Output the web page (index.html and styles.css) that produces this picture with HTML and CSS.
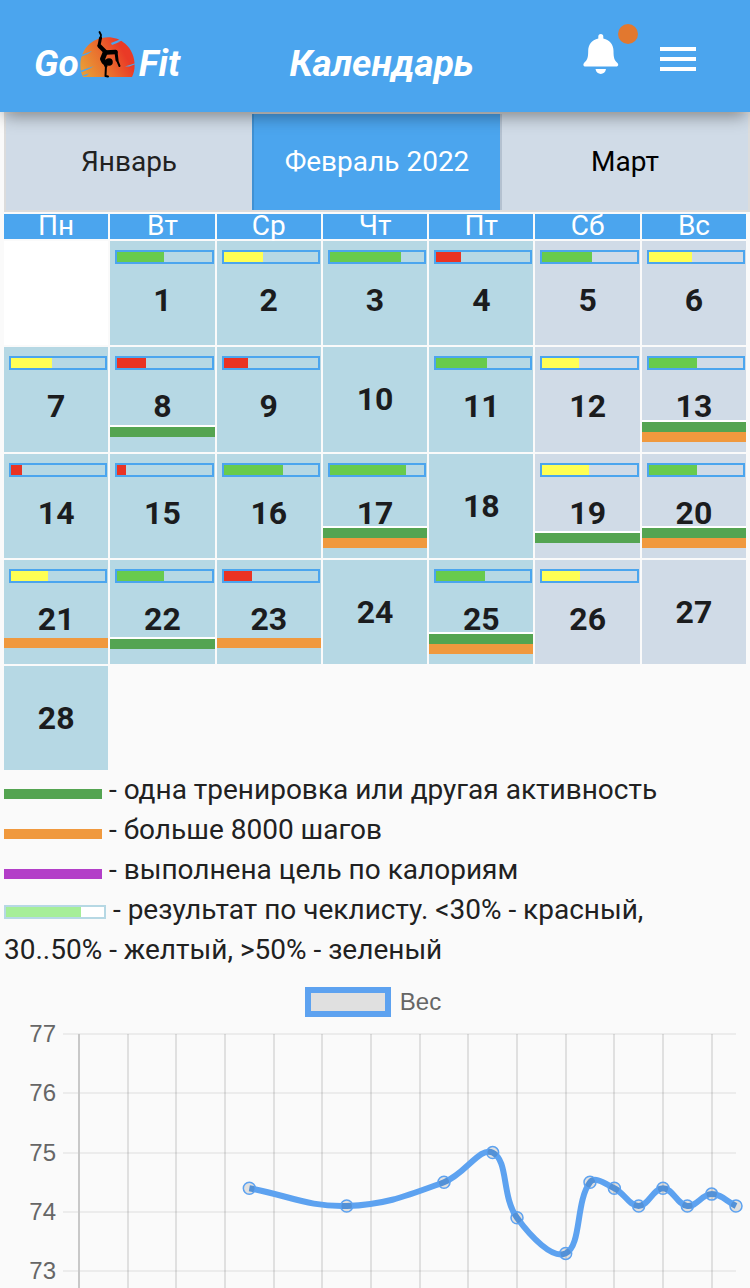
FILE: index.html
```html
<!DOCTYPE html>
<html lang="ru">
<head>
<meta charset="utf-8">
<meta name="viewport" content="width=device-width, initial-scale=1">
<title>GoFit – Календарь</title>
<link rel="stylesheet" href="styles.css">
</head>
<body>
<header class="header">
  <a class="logo" href="#" aria-label="Go Fit">
    <span>Go</span>
    <svg class="logo-mark" viewBox="0 0 58 48" aria-hidden="true">
      <defs>
        <linearGradient id="sun" x1="0" y1="0.7" x2="1" y2="0.3">
          <stop offset="0" stop-color="#e99a36"/>
          <stop offset="0.45" stop-color="#ea6a2d"/>
          <stop offset="0.8" stop-color="#ea3a26"/>
        </linearGradient>
      </defs>
      <path fill="url(#sun)" d="M4 47C-1 37 1 22 11 13.500C21 5 37 5 46 13.500C56 22 58 37 53 47Z"/>
      <g fill="#4ba5ee">
        <path d="M1 25.500L13 21L9 24L2 26.500Z"/>
        <path d="M1 41L15 36L10 39L3 42Z"/>
        <path d="M3 45.500L10 43.500L7 46Z"/>
        <path d="M32 13L42 9L44 10L38 12.500L42 11.500L33 15Z"/>
        <path d="M46 36.500L57 33V34L50 36.500Z"/>
      </g>
      <g fill="none" stroke="#000" stroke-linecap="round" stroke-linejoin="round">
        <path stroke-width="1.800" d="M20.500 2L22 5L21.500 9"/>
        <path stroke-width="3" d="M21.500 8L20 15.500"/>
        <path stroke-width="4" d="M20.500 16L26.500 22"/>
        <path stroke-width="4.500" d="M27 22.500L36.500 22"/>
        <path stroke-width="3" d="M37 22L38 30"/>
        <path stroke-width="2" d="M38 30L40.500 36"/>
        <path stroke-width="5" d="M26 23L23.500 29L25 32"/>
        <path stroke-width="3" d="M25.500 33L27 36"/>
        <path stroke-width="2" d="M27 35L26.500 46L29 46.500"/>
      </g>
      <circle cx="30" cy="32" r="3.800"/>
    </svg>
    <span>Fit</span>
  </a>
  <h1 class="title">Календарь</h1>
  <div class="actions">
    <button class="icon-button bell" type="button" aria-label="Уведомления">
      <svg width="36" height="40" viewBox="0 0 36 40" aria-hidden="true">
        <path fill="#fff" d="M15.300 2.500A2.500 2.500 0 0 1 20.300 2.500V4.500C27 6 30.500 11 30.500 17C30.500 24 31.500 26.500 34.500 29C36 31 35 32.600 33 32.600H2.500C0.500 32.600-.3 31 1 29C4.500 26 5.200 23 5.200 17C5.200 11 8.500 6 15.300 4.500Z"/>
        <path fill="#fff" d="M12.500 35H23C22 41.500 13.500 41.500 12.500 35Z"/>
      </svg>
      <span class="dot"></span>
    </button>
    <button class="icon-button" type="button" aria-label="Меню">
      <svg width="36" height="24" viewBox="0 0 36 24" aria-hidden="true">
        <path fill="#fff" d="M0 0H36V4H0ZM0 10H36V14H0ZM0 20H36V24H0Z"/>
      </svg>
    </button>
  </div>
</header>

<main>
  <nav class="months" aria-label="Месяц">
    <button class="month" type="button">Январь</button>
    <button class="month month-active" type="button">Февраль 2022</button>
    <button class="month month-next" type="button">Март</button>
  </nav>

  <table class="calendar">
    <thead>
      <tr><th>Пн</th><th>Вт</th><th>Ср</th><th>Чт</th><th>Пт</th><th>Сб</th><th>Вс</th></tr>
    </thead>
    <tbody>
      <tr>
        <td class="blank"></td>
        <td><div class="bar"><i class="good" style="width:50%"></i></div><b>1</b></td>
        <td><div class="bar"><i class="fair" style="width:42%"></i></div><b>2</b></td>
        <td><div class="bar"><i class="good" style="width:75%"></i></div><b>3</b></td>
        <td><div class="bar"><i class="poor" style="width:26%"></i></div><b>4</b></td>
        <td class="weekend"><div class="bar"><i class="good" style="width:53%"></i></div><b>5</b></td>
        <td class="weekend"><div class="bar"><i class="fair" style="width:46%"></i></div><b>6</b></td>
      </tr>
      <tr>
        <td><div class="bar"><i class="fair" style="width:43%"></i></div><b>7</b></td>
        <td><div class="bar"><i class="poor" style="width:30%"></i></div><b>8</b><div class="marks"><i class="workout"></i></div></td>
        <td><div class="bar"><i class="poor" style="width:26%"></i></div><b>9</b></td>
        <td><b>10</b></td>
        <td><div class="bar"><i class="good" style="width:54%"></i></div><b>11</b></td>
        <td class="weekend"><div class="bar"><i class="fair" style="width:39%"></i></div><b>12</b></td>
        <td class="weekend"><div class="bar"><i class="good" style="width:51%"></i></div><b>13</b><div class="marks"><i class="workout"></i><i class="steps"></i></div></td>
      </tr>
      <tr>
        <td><div class="bar"><i class="poor" style="width:12%"></i></div><b>14</b></td>
        <td><div class="bar"><i class="poor" style="width:9%"></i></div><b>15</b></td>
        <td><div class="bar"><i class="good" style="width:63%"></i></div><b>16</b></td>
        <td><div class="bar"><i class="good" style="width:81%"></i></div><b>17</b><div class="marks"><i class="workout"></i><i class="steps"></i></div></td>
        <td><b>18</b></td>
        <td class="weekend"><div class="bar"><i class="fair" style="width:49%"></i></div><b>19</b><div class="marks"><i class="workout"></i></div></td>
        <td class="weekend"><div class="bar"><i class="good" style="width:51%"></i></div><b>20</b><div class="marks"><i class="workout"></i><i class="steps"></i></div></td>
      </tr>
      <tr>
        <td><div class="bar"><i class="fair" style="width:39%"></i></div><b>21</b><div class="marks"><i class="steps"></i></div></td>
        <td><div class="bar"><i class="good" style="width:50%"></i></div><b>22</b><div class="marks"><i class="workout"></i></div></td>
        <td><div class="bar"><i class="poor" style="width:30%"></i></div><b>23</b><div class="marks"><i class="steps"></i></div></td>
        <td><b>24</b></td>
        <td><div class="bar"><i class="good" style="width:52%"></i></div><b>25</b><div class="marks"><i class="workout"></i><i class="steps"></i></div></td>
        <td class="weekend"><div class="bar"><i class="fair" style="width:40%"></i></div><b>26</b></td>
        <td class="weekend"><b>27</b></td>
      </tr>
      <tr>
        <td><b>28</b></td>
      </tr>
    </tbody>
  </table>

  <div class="legend">
    <p><i class="swatch workout"></i> - одна тренировка или другая активность</p>
    <p><i class="swatch steps"></i> - больше 8000 шагов</p>
    <p><i class="swatch calories"></i> - выполнена цель по калориям</p>
    <p><span class="bar bar-sample"><i style="width:77%"></i></span> - результат по чеклисту. &lt;30% - красный, 30..50% - желтый, &gt;50% - зеленый</p>
  </div>

  <figure class="chart">
    <figcaption class="chart-legend"><span class="chart-swatch"></span>Вес</figcaption>
    <svg class="plot" viewBox="0 0 750 264" role="img" aria-label="График веса"></svg>
  </figure>
</main>
<script src="chart.js"></script>
</body>
</html>
```
FILE: styles.css
```css
* {
  box-sizing: border-box;
}

body {
  margin: 0;
  background: #fafafa;
  color: #212121;
  font: 400 28px/40px Roboto, sans-serif;
}

button {
  margin: 0;
  padding: 0;
  border: 0;
  background: none;
  color: inherit;
  font: inherit;
}

.header {
  position: relative;
  z-index: 1;
  display: flex;
  align-items: center;
  justify-content: space-between;
  height: 112px;
  padding: 16px 54px 0 34px;
  background: #4ba5ee;
  box-shadow: 0 8px 16px -4px rgba(0, 0, 0, 0.4);
  color: #fff;
}

.logo {
  display: flex;
  align-items: center;
  color: inherit;
  font-size: 37px;
  font-style: italic;
  font-weight: 700;
  text-decoration: none;
}

.logo-mark {
  width: 58px;
  height: 48px;
  margin: 0 2px 20px 0;
}

.title {
  margin: 0;
  font-size: 37px;
  font-style: italic;
  font-weight: 700;
}

.actions {
  display: flex;
  align-items: center;
  gap: 41px;
  padding-bottom: 10px;
}

.icon-button {
  display: flex;
}

.bell {
  position: relative;
  padding-bottom: 10px;
}

.dot {
  position: absolute;
  top: -10px;
  left: 35px;
  width: 20px;
  height: 20px;
  border-radius: 50%;
  background: #e2782f;
}

.months {
  display: grid;
  grid-template-columns: repeat(3, 1fr);
  height: 100px;
  margin-left: 4px;
  border: solid #dcdcdc;
  border-width: 2px 2px 2px 0;
}

.month {
  border-left: 2px solid #dcdcdc;
  background: #d0dbe7;
}

.month-active {
  border-left-color: #4091d3;
  background: #4ba5ee;
  color: #fff;
}

.month-next {
  border-left-color: #b4c1d0;
  color: #000;
}

.calendar {
  display: grid;
  grid-template-columns: repeat(7, 1fr);
  gap: 2px;
  padding: 2px 4px 0;
}

.calendar thead,
.calendar tbody,
.calendar tr {
  display: contents;
}

.calendar th {
  height: 25px;
  padding: 0;
  background: #4ba5ee;
  color: #fff;
  font-weight: 400;
  line-height: 24px;
}

.calendar td {
  position: relative;
  display: flex;
  flex-direction: column;
  aspect-ratio: 1;
  padding: 9px 1px 9px 5px;
  background: #b6d8e4;
}

.calendar .weekend {
  background: #d0dbe7;
}

.calendar .blank {
  background: #fff;
}

.calendar b {
  display: flex;
  flex: 1;
  align-items: center;
  justify-content: center;
  padding-right: 4px;
  font-size: 32px;
  font-weight: 700;
  color: #1b1c1e;
}

.bar {
  display: flex;
  height: 14px;
  border: 2px solid #4ba5ee;
}

.good {
  background: #68cb4d;
}

.fair {
  background: #ffff54;
}

.poor {
  background: #ea3323;
}

.marks {
  position: absolute;
  right: 0;
  bottom: 0;
  left: 0;
  display: flex;
  flex-direction: column;
  justify-content: center;
  height: 42px;
}

.marks i {
  height: 10px;
}

.workout {
  background: #54a451;
}

.marks .workout {
  height: 12px;
  border-top: 2px solid #fff;
}

.steps {
  background: #f0993e;
}

.calories {
  background: #b33ec8;
}

.legend {
  padding: 0 4px;
}

.legend p {
  margin: 0;
}

.swatch {
  display: inline-block;
  width: 98px;
  height: 10px;
}

.bar-sample {
  display: inline-flex;
  width: 102px;
  border-color: #b6d8e4;
  background: #fff;
  vertical-align: 2px;
}

.bar-sample i {
  background: #a6ee98;
}

.chart {
  margin: 0;
  color: #666;
  font: 24px/30px "Liberation Sans", Arial, sans-serif;
}

.chart-legend {
  display: flex;
  justify-content: center;
  gap: 9px;
  padding: 17px 4px 7px 0;
}

.chart-swatch {
  width: 86px;
  height: 30px;
  border: 6px solid #5da2f0;
  background: #e0e0e0;
}

.plot {
  display: block;
  width: 100%;
}

.plot text {
  fill: #666;
  text-anchor: end;
}

.grid-row {
  stroke: #ececec;
  stroke-width: 2;
}

.grid-column {
  stroke: rgba(0, 0, 0, 0.1);
  stroke-width: 2;
}

.grid-axis {
  stroke: #c8c8c8;
  stroke-width: 2;
}

.line {
  fill: none;
  stroke: #5da2f0;
  stroke-width: 6;
}

.point {
  fill: rgba(0, 0, 0, 0.1);
  stroke: #5da2f0;
  stroke-width: 1.5;
}
```
FILE: chart.js
```js
const plot = document.querySelector(".plot");
const weights = { 8: 74.4, 12: 74.1, 16: 74.5, 18: 75, 19: 73.9, 21: 73.3, 22: 74.5, 23: 74.4, 24: 74.1, 25: 74.4, 26: 74.1, 27: 74.3, 28: 74.1 };
const xOf = day => 79 + (day - 1) * (657 / 27);
const yOf = kg => 10 + (77 - kg) * 59.3;

function add(name, attrs, text) {
  const node = document.createElementNS("http://www.w3.org/2000/svg", name);
  for (const key in attrs) node.setAttribute(key, attrs[key]);
  if (text) node.textContent = text;
  plot.appendChild(node);
}

for (let kg = 77; kg >= 73; kg--) {
  const y = Math.round(yOf(kg));
  add("path", { class: "grid-row", d: `M63 ${y}H736` });
  add("text", { x: 56, y: y + 8 }, String(kg));
}

for (let day = 1; day < 28; day += 2) {
  add("path", { class: day === 1 ? "grid-axis" : "grid-column", d: `M${Math.round(xOf(day))} 10V264` });
}

// Smooth curve: control points follow the neighbours' chord, tension 0.4.
const points = Object.keys(weights).map(day => [xOf(+day), yOf(weights[day])]);
const controls = points.map((p, i) => {
  const prev = points[i - 1] || p;
  const next = points[i + 1] || p;
  const before = Math.hypot(p[0] - prev[0], p[1] - prev[1]);
  const after = Math.hypot(next[0] - p[0], next[1] - p[1]);
  const a = 0.4 * before / (before + after);
  const b = 0.4 * after / (before + after);
  const dx = next[0] - prev[0];
  const dy = next[1] - prev[1];
  return { into: [p[0] - a * dx, p[1] - a * dy], out: [p[0] + b * dx, p[1] + b * dy] };
});

let d = `M${points[0]}`;
for (let i = 1; i < points.length; i++) {
  d += `C${controls[i - 1].out} ${controls[i].into} ${points[i]}`;
}
add("path", { class: "line", d });
points.forEach(([cx, cy]) => add("circle", { class: "point", cx, cy, r: 6 }));
```
